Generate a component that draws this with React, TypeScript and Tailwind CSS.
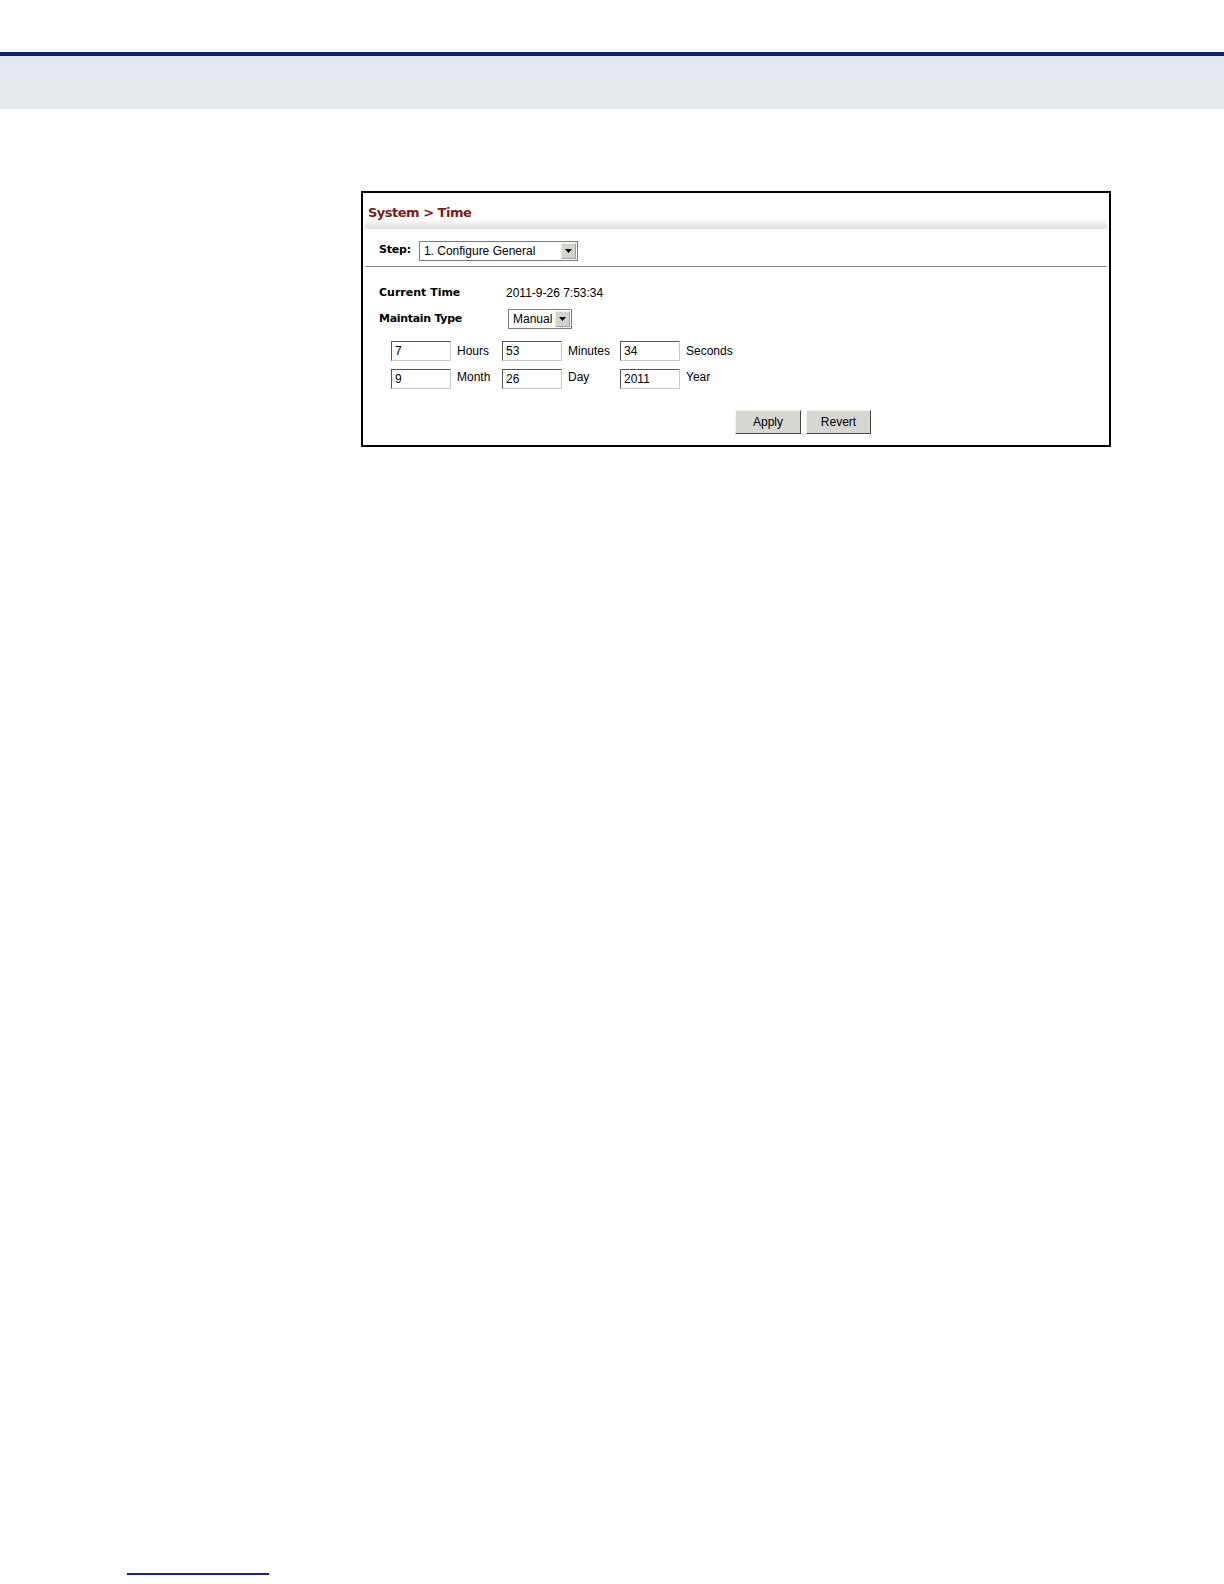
import React from 'react';

const Arrow = () => (
  <svg width="7" height="4" viewBox="0 0 7 4">
    <path d="M0 0h7L3.5 4z" fill="#000" />
  </svg>
);

const Select = ({ value, width }: { value: string; width: string }) => (
  <div className={`flex h-5 items-stretch border border-[#7a7a7a] bg-white ${width}`}>
    <div className="flex flex-1 items-center pl-1 text-[12px] text-black">{value}</div>
    <div className="m-px flex w-[15px] items-center justify-center border border-[#ececec] border-b-[#a0a0a0] border-r-[#a0a0a0] bg-[#d6d3ce]">
      <Arrow />
    </div>
  </div>
);

const Field = ({ value }: { value: string }) => (
  <div className="flex h-5 w-[60px] items-center border border-[#c9c9c9] border-l-[#555] border-t-[#555] bg-white pl-[3px] text-[12px] text-black">
    {value}
  </div>
);

const Button = ({ label, width }: { label: string; width: string }) => (
  <div className={`flex h-6 items-center justify-center border border-[#f4f4f4] border-b-[#444] border-r-[#444] bg-[#d8d6d0] text-[12px] text-black ${width}`}>
    {label}
  </div>
);

export default function App() {
  const rows = [
    [
      ['7', 'Hours'],
      ['53', 'Minutes'],
      ['34', 'Seconds'],
    ],
    [
      ['9', 'Month'],
      ['26', 'Day'],
      ['2011', 'Year'],
    ],
  ];

  return (
    <div className="relative min-h-[1584px] w-[1224px] bg-white font-['Liberation_Sans',Arial,sans-serif]">
      {/* page header */}
      <div className="h-[52px]" />
      <div className="h-1 bg-[#0b2466]" />
      <div className="h-[53px] bg-gradient-to-b from-[#e4e8f1] to-[#e5e9ec]" />

      {/* panel */}
      <div className="ml-[361px] mt-[82px] w-[750px] border-2 border-black bg-white">
        <div className="mx-[2px] flex h-[36px] items-start bg-gradient-to-b from-white via-white via-70% to-[#dedede] pl-[3px] pt-[12px]">
          <span className="font-['DejaVu_Sans',Verdana,sans-serif] text-[13px] font-bold leading-4 tracking-[-0.5px] text-[#7b1a1a]">
            System &gt; Time
          </span>
        </div>
        <div className="mx-[2px] flex h-[38px] items-center gap-[8px] border-b border-[#8a8a8a] pl-[14px] pt-[6px]">
          <span className="font-['DejaVu_Sans',Verdana,sans-serif] text-[11px] font-bold tracking-[-0.2px] text-black">Step:</span>
          <Select value="1. Configure General" width="w-[159px]" />
        </div>

        <div className="pl-[16px] pt-[18px]">
          <div className="flex h-4 items-center">
            <span className="w-[127px] font-['DejaVu_Sans',Verdana,sans-serif] text-[11px] font-bold text-black">Current Time</span>
            <span className="text-[12px] text-black">2011-9-26 7:53:34</span>
          </div>
          <div className="mt-[8px] flex h-5 items-center">
            <span className="w-[129px] font-['DejaVu_Sans',Verdana,sans-serif] text-[11px] font-bold tracking-[-0.3px] text-black">Maintain Type</span>
            <Select value="Manual" width="w-[64px]" />
          </div>

          <div className="ml-[12px] mt-[12px] flex flex-col gap-[8px]">
            {rows.map((row, i) => (
              <div key={i} className="flex items-center">
                {row.map(([v, label], j) => (
                  <div key={j} className={`flex items-center ${j === 0 ? 'w-[111px]' : j === 1 ? 'w-[118px]' : ''}`}>
                    <Field value={v} />
                    <span className={`ml-[6px] text-[12px] text-black ${i === 1 ? '-mt-[4px]' : '-mt-[1px]'}`}>{label}</span>
                  </div>
                ))}
              </div>
            ))}
          </div>

          <div className="ml-[356px] mt-[21px] flex gap-[5px] pb-[11px]">
            <Button label="Apply" width="w-[66px]" />
            <Button label="Revert" width="w-[65px]" />
          </div>
        </div>
      </div>

      {/* footer rule */}
      <div className="absolute left-[127px] top-[1573px] h-[2px] w-[142px] bg-[#1a237e]" />
    </div>
  );
}
